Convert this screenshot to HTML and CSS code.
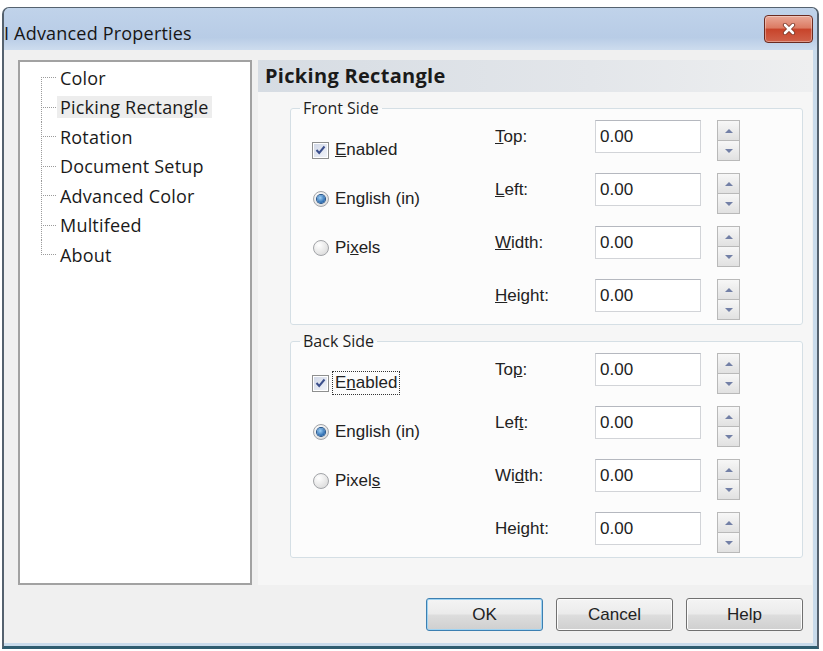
FILE: index.html
```html
<!DOCTYPE html>
<html lang="en">
<head>
    <meta charset="UTF-8">
    <meta name="viewport" content="width=device-width, initial-scale=1.0">
    <title>Advanced Properties</title>
    <link rel="stylesheet" href="styles.css">
</head>
<body>

    <div class="window">
        <!-- Title bar -->
        <div class="titlebar">
            <span class="title">I Advanced Properties</span>
            <button class="close-btn" aria-label="Close">
                <svg width="14" height="12" viewBox="0 0 14 12">
                    <path d="M3 2 L11 10 M11 2 L3 10" stroke="#7a3526" stroke-width="4.2" stroke-linecap="round"/>
                    <path d="M3 2 L11 10 M11 2 L3 10" stroke="#fff" stroke-width="2.6" stroke-linecap="round"/>
                </svg>
            </button>
        </div>

        <div class="client">
            <div class="main">
                <!-- Page tree -->
                <div class="tree">
                    <ul>
                        <li><span>Color</span></li>
                        <li class="selected"><span>Picking Rectangle</span></li>
                        <li><span>Rotation</span></li>
                        <li><span>Document Setup</span></li>
                        <li><span>Advanced Color</span></li>
                        <li><span>Multifeed</span></li>
                        <li><span>About</span></li>
                    </ul>
                </div>

                <!-- Page: Picking Rectangle -->
                <div class="page">
                    <div class="page-header">Picking Rectangle</div>
                    <div class="page-body">

                        <fieldset class="side">
                            <legend>Front Side</legend>
                            <div class="options">
                                <label class="opt"><span class="check on"><svg width="11" height="10" viewBox="0 0 11 10"><path d="M1.5 5 L4.2 8 L9.5 1.5" fill="none" stroke="#3b4f8c" stroke-width="2"/></svg></span><span><u>E</u>nabled</span></label>
                                <label class="opt"><span class="radio on"></span><span>English (in)</span></label>
                                <label class="opt"><span class="radio"></span><span>Pi<u>x</u>els</span></label>
                            </div>
                            <span class="field-label"><u>T</u>op:</span>
                            <input class="num" type="text" value="0.00">
                            <div class="spin"><span class="up"></span><span class="down"></span></div>
                            <span class="field-label"><u>L</u>eft:</span>
                            <input class="num" type="text" value="0.00">
                            <div class="spin"><span class="up"></span><span class="down"></span></div>
                            <span class="field-label"><u>W</u>idth:</span>
                            <input class="num" type="text" value="0.00">
                            <div class="spin"><span class="up"></span><span class="down"></span></div>
                            <span class="field-label"><u>H</u>eight:</span>
                            <input class="num" type="text" value="0.00">
                            <div class="spin"><span class="up"></span><span class="down"></span></div>
                        </fieldset>

                        <fieldset class="side back">
                            <legend>Back Side</legend>
                            <div class="options">
                                <label class="opt"><span class="check on"><svg width="11" height="10" viewBox="0 0 11 10"><path d="M1.5 5 L4.2 8 L9.5 1.5" fill="none" stroke="#3b4f8c" stroke-width="2"/></svg></span><span class="focus">E<u>n</u>abled</span></label>
                                <label class="opt"><span class="radio on"></span><span>English (in)</span></label>
                                <label class="opt"><span class="radio"></span><span>Pixel<u>s</u></span></label>
                            </div>
                            <span class="field-label">To<u>p</u>:</span>
                            <input class="num" type="text" value="0.00">
                            <div class="spin"><span class="up"></span><span class="down"></span></div>
                            <span class="field-label">Lef<u>t</u>:</span>
                            <input class="num" type="text" value="0.00">
                            <div class="spin"><span class="up"></span><span class="down"></span></div>
                            <span class="field-label">Wi<u>d</u>th:</span>
                            <input class="num" type="text" value="0.00">
                            <div class="spin"><span class="up"></span><span class="down"></span></div>
                            <span class="field-label">Hei<u>g</u>ht:</span>
                            <input class="num" type="text" value="0.00">
                            <div class="spin"><span class="up"></span><span class="down"></span></div>
                        </fieldset>

                    </div>
                </div>
            </div>

            <!-- Dialog buttons -->
            <div class="buttons">
                <button class="btn default">OK</button>
                <button class="btn">Cancel</button>
                <button class="btn">Help</button>
            </div>
        </div>
    </div>

</body>
</html>
```

FILE: styles.css
```css
/* Page */
body {
    margin: 0;
    background: #fff;
    font-family: "Liberation Sans", Arial, sans-serif;
    color: #222;
}

/* Window frame */
.window {
    box-sizing: border-box;
    width: 817px;
    margin: 7px 0 0 2px;
    border: 2px solid #55626f;
    border-top-width: 1px;
    border-bottom: 3px solid #2f5d70;
    border-radius: 7px 7px 0 0;
    background: #c9dbeb;
}

.titlebar {
    display: flex;
    align-items: center;
    justify-content: space-between;
    height: 42px;
    padding: 0 4px 0 0;
    border-radius: 6px 6px 0 0;
    background: linear-gradient(#c0d3ea, #b8cce6 70%, #cddcee);
}

.title {
    margin-top: 8px;
    font-family: "Open Sans", sans-serif;
    font-size: 18px;
    letter-spacing: 0.2px;
    color: #161616;
}

.close-btn {
    display: flex;
    align-items: center;
    justify-content: center;
    width: 49px;
    height: 28px;
    padding: 0;
    border: 1px solid #6b2b20;
    border-radius: 4px;
    background: linear-gradient(#e9a897, #dc7b63 45%, #c8442b 52%, #d0624a);
    box-shadow: inset 0 0 0 1px rgba(255, 255, 255, 0.35);
}

/* Client area */
.client {
    margin: 0 4px 3px 0;
    padding: 10px 1px 12px 14px;
    background: #f0f0f0;
}

.main {
    display: grid;
    grid-template-columns: 234px 1fr;
    column-gap: 6px;
    height: 525px;
}

/* Tree */
.tree {
    box-sizing: border-box;
    border: 2px solid #a2a2a2;
    background: #fff;
}

.tree ul {
    list-style: none;
    margin: 0;
    padding: 1px 0 0 21px;
}

.tree li {
    display: flex;
    align-items: center;
    height: 29.5px;
}

.tree li::before {
    content: "";
    align-self: stretch;
    width: 16px;
    background:
        linear-gradient(to right, #9b9b9b 50%, transparent 0) 0 50% / 2px 1px repeat-x,
        linear-gradient(#9b9b9b 50%, transparent 0) 0 0 / 1px 2px repeat-y;
}

.tree li:first-child::before {
    background:
        linear-gradient(#fff, #fff) 0 0 / 1px calc(50% - 1px) no-repeat,
        linear-gradient(to right, #9b9b9b 50%, transparent 0) 0 50% / 2px 1px repeat-x,
        linear-gradient(#9b9b9b 50%, transparent 0) 0 0 / 1px 2px repeat-y;
}

.tree li:last-child::before {
    background:
        linear-gradient(#fff, #fff) 0 100% / 1px calc(50% - 1px) no-repeat,
        linear-gradient(to right, #9b9b9b 50%, transparent 0) 0 50% / 2px 1px repeat-x,
        linear-gradient(#9b9b9b 50%, transparent 0) 0 0 / 1px 2px repeat-y;
}

.tree li span {
    padding: 0 3px;
    font-family: "Open Sans", sans-serif;
    font-size: 18px;
    line-height: 22px;
    letter-spacing: 0.2px;
    color: #1a1a1a;
}

.tree li.selected span {
    background: #ededed;
}

/* Property page */
.page {
    display: flex;
    flex-direction: column;
}

.page-header {
    height: 32px;
    padding-left: 7px;
    font-family: "Open Sans", sans-serif;
    font-size: 20px;
    font-weight: bold;
    line-height: 32px;
    letter-spacing: 0.3px;
    color: #1a1a1a;
    background: linear-gradient(to right, #d6dce3, #e3e6ea 60%, #eeeff0);
}

.page-body {
    flex: 1;
    padding: 6px 9px 0 32px;
    background: #f6f6f6;
}

/* Group boxes */
.side {
    display: grid;
    grid-template-columns: 183px 100px 106px 23px;
    grid-template-rows: repeat(4, 41px);
    row-gap: 12px;
    align-items: start;
    min-width: 0;
    margin: 0;
    padding: 2px 0 4px 21px;
    border: 1px solid #d5dfe5;
    border-radius: 3px;
    background: #fcfcfc;
    font-size: 17px;
}

.side.back {
    margin-top: 6px;
}

.side legend {
    margin-left: -12px;
    padding: 0 3px;
    font-family: "Open Sans", sans-serif;
    font-size: 16px;
    line-height: 20px;
    color: #1e1e1e;
}

.options {
    grid-row: 1 / 5;
    display: flex;
    flex-direction: column;
    gap: 25px;
    padding-top: 18px;
}

.opt {
    display: flex;
    align-items: center;
    gap: 6px;
    height: 24px;
}

.focus {
    padding: 1px 2px;
    margin-left: -2px;
    outline: 1px dotted #333;
}

/* Checkbox */
.check {
    box-sizing: border-box;
    display: flex;
    align-items: center;
    justify-content: center;
    width: 17px;
    height: 17px;
    border: 1px solid #8e8f8f;
    background: linear-gradient(135deg, #cfd6e6, #f3f5fa);
    box-shadow: inset 0 0 0 1px #fff;
}

/* Radio buttons */
.radio {
    box-sizing: border-box;
    display: flex;
    align-items: center;
    justify-content: center;
    width: 16px;
    height: 16px;
    margin-left: 1px;
    border: 1px solid #a2a4a8;
    border-radius: 50%;
    background: radial-gradient(circle at 35% 30%, #ffffff, #d4d4d4);
}

.radio.on::after {
    content: "";
    width: 8px;
    height: 8px;
    border-radius: 50%;
    background: radial-gradient(circle at 40% 35%, #9fd0f5, #2b6bb0 70%);
    box-shadow: 0 0 0 1px #1f4f86;
}

/* Numeric fields */
.field-label {
    line-height: 33px;
}

.num {
    box-sizing: border-box;
    width: 106px;
    height: 33px;
    margin: 0;
    padding: 0 4px;
    border: 1px solid #d2d4d8;
    border-top-color: #b5b8bf;
    background: #fff;
    font-family: "Liberation Sans", Arial, sans-serif;
    font-size: 17px;
    color: #222;
}

.spin {
    display: flex;
    flex-direction: column;
    width: 23px;
    height: 41px;
    margin-left: 16px;
}

.spin span {
    flex: 1;
    display: flex;
    align-items: center;
    justify-content: center;
    border: 1px solid #b9b9b9;
    background: linear-gradient(#f7f7f7, #e1e1e1);
}

.spin .down {
    border-top: none;
}

.spin .up::after,
.spin .down::after {
    content: "";
    border-left: 4px solid transparent;
    border-right: 4px solid transparent;
}

.spin .up::after {
    border-bottom: 4px solid #7380a6;
}

.spin .down::after {
    border-top: 4px solid #7380a6;
}

/* Buttons */
.buttons {
    display: flex;
    justify-content: flex-end;
    gap: 13px;
    margin-top: 13px;
    padding-right: 9px;
}

.btn {
    width: 117px;
    height: 33px;
    border: 1px solid #707070;
    border-radius: 3px;
    background: linear-gradient(#f4f4f4, #ebebeb 48%, #dddddd 52%, #cfcfcf);
    box-shadow: inset 0 0 0 1px #fcfcfc;
    font-family: "Liberation Sans", Arial, sans-serif;
    font-size: 17px;
    color: #222;
}

.btn.default {
    border-color: #3c7fb1;
    box-shadow: inset 0 0 0 1px #9fd3f2;
}
```
